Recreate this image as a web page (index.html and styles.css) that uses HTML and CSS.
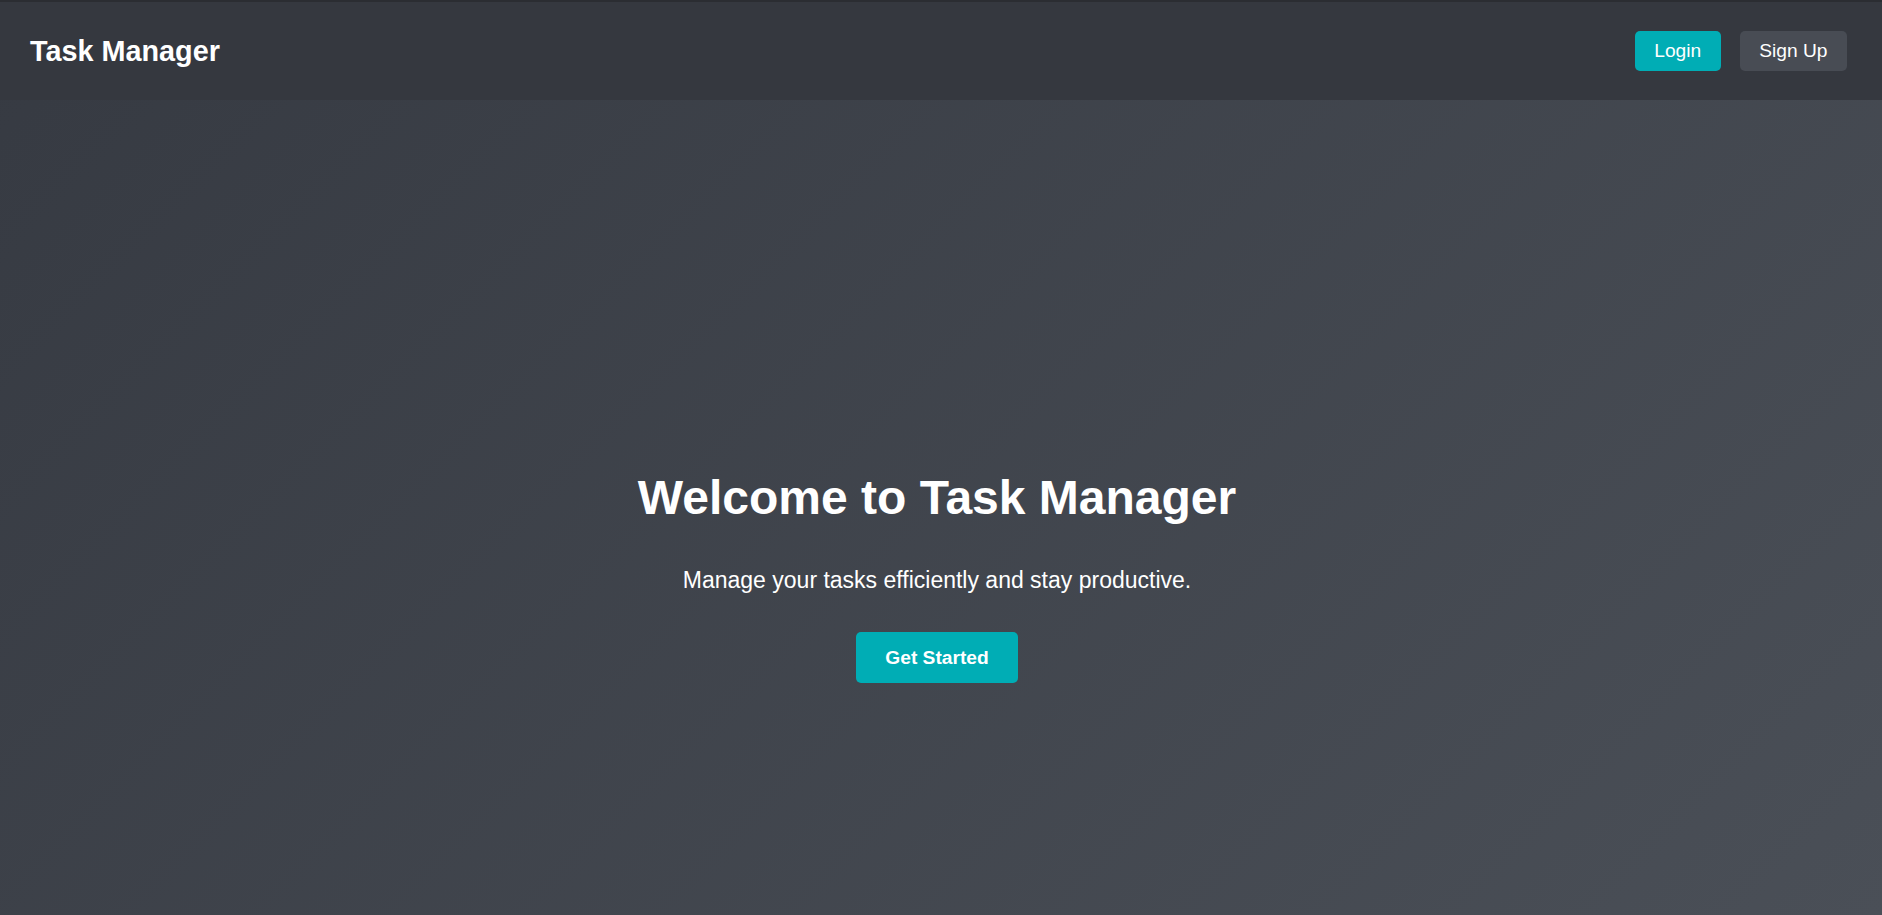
FILE: index.html
```html
<!DOCTYPE html>
<html lang="en">
<head>
<meta charset="utf-8">
<title>Task Manager</title>
<link rel="stylesheet" href="styles.css">
</head>
<body>
<header class="topbar">
  <div class="brand">Task Manager</div>
  <nav class="actions">
    <a class="btn btn-primary" href="#">Login</a>
    <a class="btn btn-secondary" href="#">Sign Up</a>
  </nav>
</header>
<main class="hero">
  <h1 class="hero-title">Welcome to Task Manager</h1>
  <p class="hero-text">Manage your tasks efficiently and stay productive.</p>
  <a class="btn btn-cta" href="#">Get Started</a>
</main>
</body>
</html>
```

FILE: styles.css
```css
* { box-sizing: border-box; }
html, body { margin: 0; padding: 0; }
body {
  font-family: "Liberation Sans", Arial, sans-serif;
  color: #ffffff;
  min-height: 915px;
  background: linear-gradient(135deg, #363a42 0%, #4a4f57 100%);
  background-attachment: fixed;
}
.topbar {
  height: 100px;
  border-top: 2px solid #2b2d32;
  background: #35383f;
  display: flex;
  align-items: center;
  justify-content: space-between;
  padding: 0 35px 0 30px;
}
.brand {
  font-size: 28.8px;
  font-weight: bold;
}
.actions {
  display: flex;
  gap: 19px;
}
.btn {
  display: inline-block;
  color: #ffffff;
  text-decoration: none;
  font-size: 19.2px;
  line-height: 22px;
  padding: 9px 19.5px;
  border-radius: 5px;
}
.btn-primary { background: #00adb5; }
.btn-secondary { background: #484c54; }
.hero {
  height: 815px;
  display: flex;
  flex-direction: column;
  align-items: center;
  justify-content: center;
  padding: 138px 8px 0 0;
  text-align: center;
}
.hero-title {
  margin: 0 0 42px;
  font-size: 48px;
  line-height: 55px;
  font-weight: bold;
}
.hero-text {
  margin: 0 0 39px;
  font-size: 23px;
  line-height: 26px;
}
.btn-cta {
  background: #00adb5;
  font-weight: bold;
  padding: 14.5px 28.8px;
  border-radius: 5px;
}
```
